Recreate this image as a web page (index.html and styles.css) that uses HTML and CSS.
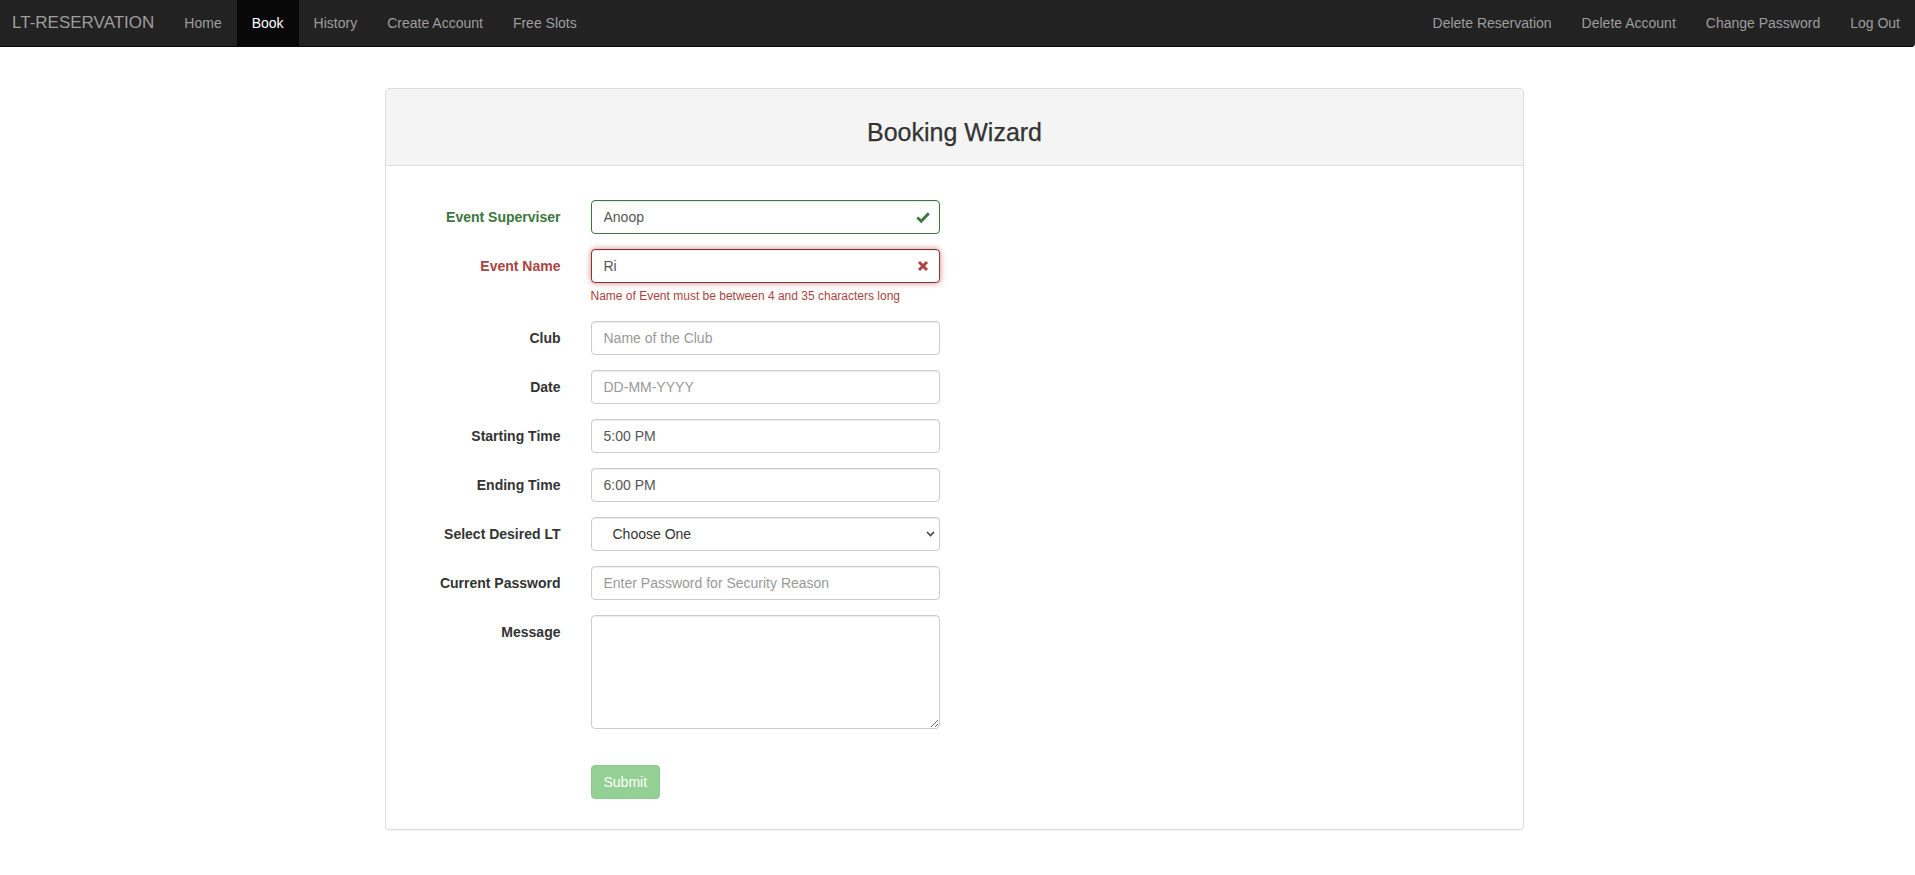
FILE: index.html
```html
<!DOCTYPE html>
<html lang="en">
<head>
<meta charset="utf-8">
<title>LT-RESERVATION — Booking Wizard</title>
<link rel="stylesheet" href="styles.css">
</head>
<body>
<nav class="navbar">
  <div class="nav-left">
    <a class="brand" href="#">LT-RESERVATION</a>
    <ul class="nav">
      <li><a href="#">Home</a></li>
      <li class="active"><a href="#">Book</a></li>
      <li><a href="#">History</a></li>
      <li><a href="#">Create Account</a></li>
      <li><a href="#">Free Slots</a></li>
    </ul>
  </div>
  <ul class="nav">
    <li><a href="#">Delete Reservation</a></li>
    <li><a href="#">Delete Account</a></li>
    <li><a href="#">Change Password</a></li>
    <li><a href="#">Log Out</a></li>
  </ul>
</nav>

<main class="page">
  <section class="panel">
    <div class="panel-heading">
      <h3>Booking Wizard</h3>
    </div>
    <div class="panel-body">
      <form class="form">
        <div class="form-row has-success">
          <label class="form-label">Event Superviser</label>
          <div class="field">
            <input class="control" type="text" value="Anoop">
            <span class="feedback">
              <svg width="14" height="14" viewBox="0 0 14 14"><path d="M1.3 7.4 L5.2 11.2 L12.8 3.2" fill="none" stroke="#3c763d" stroke-width="2.8" stroke-linejoin="miter" stroke-linecap="butt"/></svg>
            </span>
          </div>
        </div>
        <div class="form-row has-error">
          <label class="form-label">Event Name</label>
          <div class="field">
            <input class="control focused" type="text" value="Ri">
            <span class="feedback">
              <svg width="12" height="12" viewBox="0 0 12 12"><path d="M2 2 L10 10 M10 2 L2 10" fill="none" stroke="#a94442" stroke-width="3"/></svg>
            </span>
            <div class="help-block">Name of Event must be between 4 and 35 characters long</div>
          </div>
        </div>
        <div class="form-row">
          <label class="form-label">Club</label>
          <div class="field"><input class="control" type="text" placeholder="Name of the Club"></div>
        </div>
        <div class="form-row">
          <label class="form-label">Date</label>
          <div class="field"><input class="control" type="text" placeholder="DD-MM-YYYY"></div>
        </div>
        <div class="form-row">
          <label class="form-label">Starting Time</label>
          <div class="field"><input class="control" type="text" value="5:00 PM"></div>
        </div>
        <div class="form-row">
          <label class="form-label">Ending Time</label>
          <div class="field"><input class="control" type="text" value="6:00 PM"></div>
        </div>
        <div class="form-row">
          <label class="form-label">Select Desired LT</label>
          <div class="field">
            <select class="control select">
              <option>Choose One</option>
            </select>
            <span class="chevron">
              <svg width="9" height="6" viewBox="0 0 9 6"><path d="M1 1 L4.5 4.5 L8 1" fill="none" stroke="#444" stroke-width="1.6"/></svg>
            </span>
          </div>
        </div>
        <div class="form-row">
          <label class="form-label">Current Password</label>
          <div class="field"><input class="control" type="password" placeholder="Enter Password for Security Reason"></div>
        </div>
        <div class="form-row">
          <label class="form-label">Message</label>
          <div class="field"><textarea class="control textarea" rows="5"></textarea></div>
        </div>
        <div class="form-row submit-row">
          <div></div>
          <div class="field"><button class="btn" type="button" disabled>Submit</button></div>
        </div>
      </form>
    </div>
  </section>
</main>
</body>
</html>
```

FILE: styles.css
```css
* { box-sizing: border-box; }

html, body {
  margin: 0;
  padding: 0;
  background: #fff;
}

body {
  font-family: "Liberation Sans", Arial, Helvetica, sans-serif;
  font-size: 14px;
  line-height: 20px;
  color: #333;
}

a { text-decoration: none; }

/* ---------- navbar ---------- */
.navbar {
  display: flex;
  justify-content: space-between;
  align-items: stretch;
  height: 47px;
  background: #222;
  border-bottom: 1px solid #080808;
  border-bottom-right-radius: 4px;
}

.nav-left {
  display: flex;
  align-items: stretch;
}

.brand {
  display: block;
  padding: 13px 15px 13px 12px;
  font-size: 17px;
  line-height: 20px;
  color: #9d9d9d;
}

.nav {
  display: flex;
  margin: 0;
  padding: 0;
  list-style: none;
}

.nav li a {
  display: block;
  padding: 13px 15px;
  line-height: 20px;
  color: #9d9d9d;
}

.nav li.active a {
  background: #080808;
  color: #fff;
}

/* ---------- page / panel ---------- */
.page {
  padding-top: 41px;
  padding-bottom: 40px;
}

.panel {
  width: 1139px;
  margin-left: calc(50% - 572.5px);
  border: 1px solid #ddd;
  border-radius: 4px;
  background: #fff;
  box-shadow: 0 1px 1px rgba(0, 0, 0, 0.05);
}

.panel-heading {
  padding: 10px 15px;
  background: #f4f4f4;
  border-bottom: 1px solid #ddd;
  border-radius: 3px 3px 0 0;
  text-align: center;
}

.panel-heading h3 {
  margin: 20px 0 10px;
  font-size: 25px;
  line-height: 26.4px;
  font-weight: 400;
  color: #333;
  -webkit-text-stroke: 0.25px #333;
}

.panel-body {
  padding: 34px 0 15px;
}

/* ---------- form ---------- */
.form-row {
  display: grid;
  grid-template-columns: 189.5px 379px;
  margin-bottom: 15px;
}

.form-label {
  padding: 7px 15px 0;
  text-align: right;
  font-weight: 700;
  color: #333;
}

.field {
  position: relative;
  padding: 0 15px;
}

.control {
  display: block;
  width: 100%;
  height: 34px;
  padding: 6px 12px;
  font-family: "Liberation Sans", Arial, Helvetica, sans-serif;
  font-size: 14px;
  line-height: 20px;
  color: #555;
  background: #fff;
  border: 1px solid #ccc;
  border-radius: 4px;
  box-shadow: inset 0 1px 1px rgba(0, 0, 0, 0.075);
  outline: none;
}

.control::placeholder { color: #999; }

.has-success .form-label { color: #3c763d; }
.has-success .control {
  border-color: #3c763d;
  padding-right: 42px;
}

.has-error .form-label { color: #a94442; }
.has-error .control {
  border-color: #a94442;
  padding-right: 42px;
}
.has-error .control.focused {
  border-color: #843534;
  box-shadow: inset 0 1px 1px rgba(0, 0, 0, 0.075), 0 0 6px #ce8483;
}

.feedback {
  position: absolute;
  top: 0;
  right: 15px;
  width: 34px;
  height: 34px;
  display: flex;
  align-items: center;
  justify-content: center;
  pointer-events: none;
}

.help-block {
  margin-top: 5px;
  margin-bottom: 1px;
  font-size: 12px;
  line-height: 17px;
  color: #a94442;
}

.select {
  -webkit-appearance: none;
  appearance: none;
  padding-left: 21px;
  color: #333;
}

.chevron {
  position: absolute;
  top: 0;
  right: 17px;
  height: 34px;
  width: 14px;
  display: flex;
  align-items: center;
  justify-content: center;
  pointer-events: none;
}

.textarea {
  height: 114px;
  resize: vertical;
}

.submit-row {
  margin-top: 36px;
  margin-bottom: 15px;
}

.btn {
  display: inline-block;
  height: 34px;
  padding: 6px 12px;
  font-family: "Liberation Sans", Arial, Helvetica, sans-serif;
  font-size: 14px;
  line-height: 20px;
  color: #fff;
  background: #5cb85c;
  border: 1px solid #4cae4c;
  border-radius: 4px;
  opacity: 0.65;
  cursor: not-allowed;
}
```
